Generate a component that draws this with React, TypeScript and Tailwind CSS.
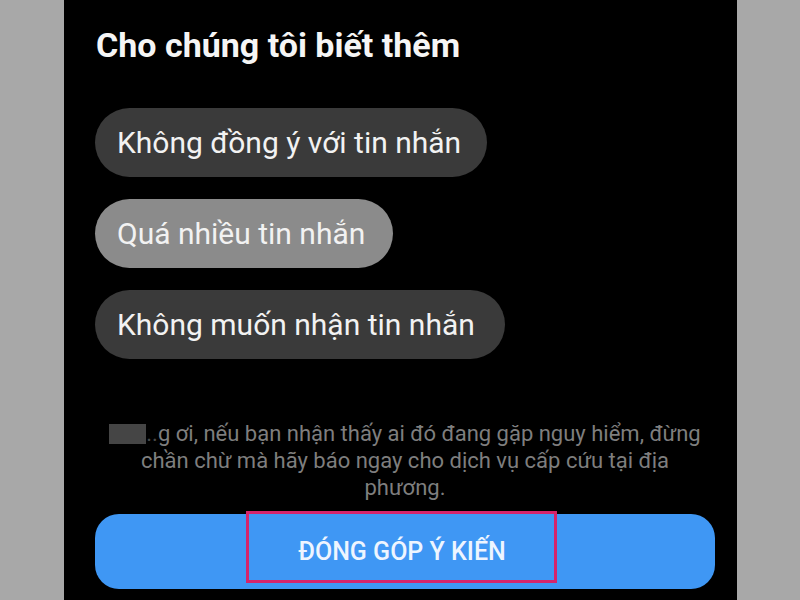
import React from "react";

export default function App() {
  const pill =
    "flex items-center h-[69px] rounded-full pl-[22px] text-[30px] text-[#f2f2f2]";
  return (
    <div
      className="w-[800px] h-[600px] flex overflow-hidden bg-black"
      style={{ fontFamily: "Roboto, 'Noto Sans', sans-serif" }}
    >
      <div className="w-[64px] h-full bg-[#a8a8a8]" />
      <div className="flex-1 h-full bg-black flex flex-col pl-[31px] pr-[22px] pt-[28px]">
        <div className="text-[34px] leading-[34px] font-bold text-[#f5f5f5] pl-[1px]">
          Cho chúng tôi biết thêm
        </div>
        <div className="flex flex-col items-start gap-[22px] mt-[46px]">
          <div className={pill + " bg-[#3a3a3a] w-[392px]"}>Không đồng ý với tin nhắn</div>
          <div className={pill + " bg-[#8b8b8b] w-[298px]"}>Quá nhiều tin nhắn</div>
          <div className={pill + " bg-[#3a3a3a] w-[410px]"}>Không muốn nhận tin nhắn</div>
        </div>
        <div className="mt-[61px] text-center text-[22px] leading-[27px] text-[#7e7e7e]">
          <span className="inline-block w-[37px] h-[20px] bg-[#454545] align-[-3px]" />
          <span className="text-[#4a4a4a]">..</span>g ơi, nếu bạn nhận thấy ai đó đang gặp nguy hiểm, đừng
          <br />
          chần chừ mà hãy báo ngay cho dịch vụ cấp cứu tại địa
          <br />
          phương.
        </div>
        <div className="relative mt-[13px] h-[75px] rounded-[24px] bg-[#3f97f4] flex items-center justify-center">
          <span className="text-[25px] font-medium text-[#eef5ff] pr-[6px]">
            ĐÓNG GÓP Ý KIẾN
          </span>
          <div className="absolute left-[151px] top-[-3px] w-[311px] h-[72px] border-[3px] border-[#d5246b]" />
        </div>
      </div>
      <div className="w-[63px] h-full bg-[#a8a8a8]" />
    </div>
  );
}
